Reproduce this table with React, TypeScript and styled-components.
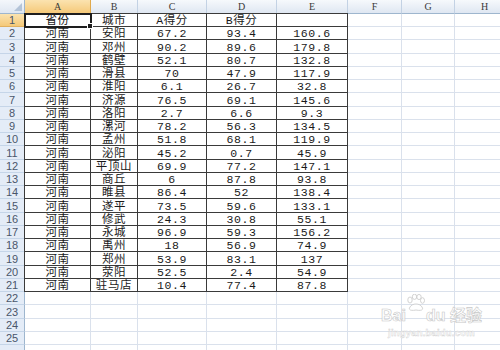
import styled, { createGlobalStyle, css } from 'styled-components';

const GlobalStyle = createGlobalStyle`
  html, body {
    margin: 0;
    padding: 0;
    background: #ffffff;
  }
  body {
    width: 500px;
    height: 350px;
    overflow: hidden;
  }
`;

const COLS = ['A', 'B', 'C', 'D', 'E', 'F', 'G', 'H'];
const ROW_COUNT = 26;
const ROW_H = 13.24;

// rows are not whole pixels in the screenshot, so spread the rounding
const rowHeights = Array.from({ length: ROW_COUNT }, (_, i) =>
  Math.round((i + 1) * ROW_H) - Math.round(i * ROW_H)
);

const data: string[][] = [
  ['省份', '城市', 'A得分', 'B得分', ''],
  ['河南', '安阳', '67.2', '93.4', '160.6'],
  ['河南', '邓州', '90.2', '89.6', '179.8'],
  ['河南', '鹤壁', '52.1', '80.7', '132.8'],
  ['河南', '滑县', '70', '47.9', '117.9'],
  ['河南', '淮阳', '6.1', '26.7', '32.8'],
  ['河南', '济源', '76.5', '69.1', '145.6'],
  ['河南', '洛阳', '2.7', '6.6', '9.3'],
  ['河南', '漯河', '78.2', '56.3', '134.5'],
  ['河南', '孟州', '51.8', '68.1', '119.9'],
  ['河南', '泌阳', '45.2', '0.7', '45.9'],
  ['河南', '平顶山', '69.9', '77.2', '147.1'],
  ['河南', '商丘', '6', '87.8', '93.8'],
  ['河南', '睢县', '86.4', '52', '138.4'],
  ['河南', '遂平', '73.5', '59.6', '133.1'],
  ['河南', '修武', '24.3', '30.8', '55.1'],
  ['河南', '永城', '96.9', '59.3', '156.2'],
  ['河南', '禹州', '18', '56.9', '74.9'],
  ['河南', '郑州', '53.9', '83.1', '137'],
  ['河南', '荥阳', '52.5', '2.4', '54.9'],
  ['河南', '驻马店', '10.4', '77.4', '87.8'],
];

const Frame = styled.div`
  position: relative;
  width: 500px;
  height: 350px;
  overflow: hidden;
`;

const Sheet = styled.div<{ $rows: string }>`
  display: grid;
  grid-template-columns: 25px 66px 47px 69px 70px 71px 54px 53px 60px;
  grid-template-rows: ${(p) => p.$rows};
`;

const Corner = styled.div`
  position: relative;
  box-sizing: border-box;
  background: linear-gradient(#f4f7fb, #dfe7f2);
  border-right: 1px solid #9eb6ce;
  border-bottom: 1px solid #9eb6ce;

  &::after {
    content: '';
    position: absolute;
    right: 2px;
    bottom: 2px;
    border-left: 8px solid transparent;
    border-bottom: 8px solid #b4c4d8;
  }
`;

const ColHeader = styled.div<{ $active?: boolean }>`
  box-sizing: border-box;
  display: flex;
  align-items: center;
  justify-content: center;
  font-family: 'Liberation Serif', serif;
  font-size: 10px;
  color: #3a3a3a;
  background: linear-gradient(#f6f9fc, #dfe7f2);
  border-right: 1px solid #c3d2e4;
  border-bottom: 1px solid #9eb6ce;
  ${(p) =>
    p.$active &&
    css`
      background: linear-gradient(#fbe3b0, #f5c979);
      border-right-color: #e0a94c;
      border-bottom-color: #c99a48;
    `}
`;

const RowHeader = styled.div<{ $active?: boolean }>`
  box-sizing: border-box;
  display: flex;
  align-items: center;
  justify-content: center;
  font-family: 'Liberation Sans', sans-serif;
  font-size: 11px;
  color: #4a566a;
  background: #e4ecf7;
  border-right: 1px solid #9eb6ce;
  border-bottom: 1px solid #c5d5e8;
  ${(p) =>
    p.$active &&
    css`
      background: linear-gradient(#fbe3b0, #f5c979);
      border-bottom-color: #e0b060;
    `}
`;

const Cell = styled.div<{ $boxed?: boolean; $left?: boolean; $top?: boolean; $selected?: boolean }>`
  position: relative;
  box-sizing: border-box;
  display: flex;
  align-items: center;
  justify-content: center;
  white-space: nowrap;
  font-family: 'Liberation Mono', 'Noto Sans CJK SC', monospace;
  font-size: 11.5px;
  letter-spacing: 0.6px;
  line-height: 13px;
  padding-top: 1px;
  color: #1a1a1a;
  border-right: 1px solid #dae1ec;
  border-bottom: 1px solid #dae1ec;
  ${(p) =>
    p.$boxed &&
    css`
      border-right-color: #3a3a3a;
      border-bottom-color: #3a3a3a;
    `}
  box-shadow: ${(p) =>
    [p.$left && '-1px 0 0 #3a3a3a', p.$top && '0 -1px 0 #3a3a3a'].filter(Boolean).join(', ') || 'none'};
  ${(p) =>
    p.$selected &&
    css`
      z-index: 2;
      outline: 2px solid #1e1e1e;
      outline-offset: -1px;
      &::after {
        content: '';
        position: absolute;
        right: -3px;
        bottom: -3px;
        width: 4px;
        height: 4px;
        background: #1e1e1e;
        border: 1px solid #fff;
      }
    `}
`;

const Watermark = styled.div`
  position: absolute;
  left: 381px;
  top: 294px;
  display: flex;
  flex-direction: column;
  align-items: center;
  pointer-events: none;
  color: rgba(255, 255, 255, 0.85);
`;

const MarkLine = styled.div`
  display: flex;
  align-items: flex-end;
  font-family: 'Liberation Sans', 'Noto Sans CJK SC', sans-serif;
  font-weight: bold;
  font-size: 16px;
  line-height: 16px;
  -webkit-text-stroke: 0.6px #c8c8c8;
`;

const MarkSub = styled.div`
  margin-top: 3px;
  font-family: 'Liberation Sans', sans-serif;
  font-weight: bold;
  font-size: 9.5px;
  letter-spacing: 0.2px;
  -webkit-text-stroke: 0.4px #cfcfcf;
`;

const Paw = () => (
  <svg width="20" height="30" viewBox="0 0 20 30" fill="rgba(255,255,255,0.8)" stroke="#c8c8c8" strokeWidth="0.8">
    <ellipse cx="4" cy="6" rx="2.2" ry="3" />
    <ellipse cx="8.5" cy="2.8" rx="2.2" ry="2.6" />
    <ellipse cx="13" cy="3" rx="2.2" ry="2.6" />
    <ellipse cx="16.5" cy="6.5" rx="2" ry="2.8" />
    <path d="M4 13 C6 9 14 9 16 13 C18 16 15 17 10 16 C5 17 2 16 4 13 Z" />
  </svg>
);

export default function App() {
  const rows = ['14px', ...rowHeights.map((h) => `${h}px`)].join(' ');

  return (
    <Frame>
      <GlobalStyle />
      <Sheet $rows={rows}>
        <Corner />
        {COLS.map((c, i) => (
          <ColHeader key={c} $active={i === 0}>
            {c}
          </ColHeader>
        ))}
        {rowHeights.map((_, r) => {
          const rowData = data[r];
          // the last row is only a sliver at the window edge
          const label = r < ROW_COUNT - 1 ? r + 1 : '';
          return [
            <RowHeader key={`h${r}`} $active={r === 0}>
              {label}
            </RowHeader>,
            ...COLS.map((c, ci) => {
              const boxed = !!rowData && ci < 5;
              return (
                <Cell
                  key={`${c}${r}`}
                  $boxed={boxed}
                  $left={boxed && ci === 0}
                  $top={boxed && r === 0}
                  $selected={r === 0 && ci === 0}
                >
                  {boxed ? rowData[ci] : ''}
                </Cell>
              );
            }),
          ];
        })}
      </Sheet>
      <Watermark>
        <MarkLine>
          <span>Bai</span>
          <Paw />
          <span>du 经验</span>
        </MarkLine>
        <MarkSub>jingyan.baidu.com</MarkSub>
      </Watermark>
    </Frame>
  );
}
